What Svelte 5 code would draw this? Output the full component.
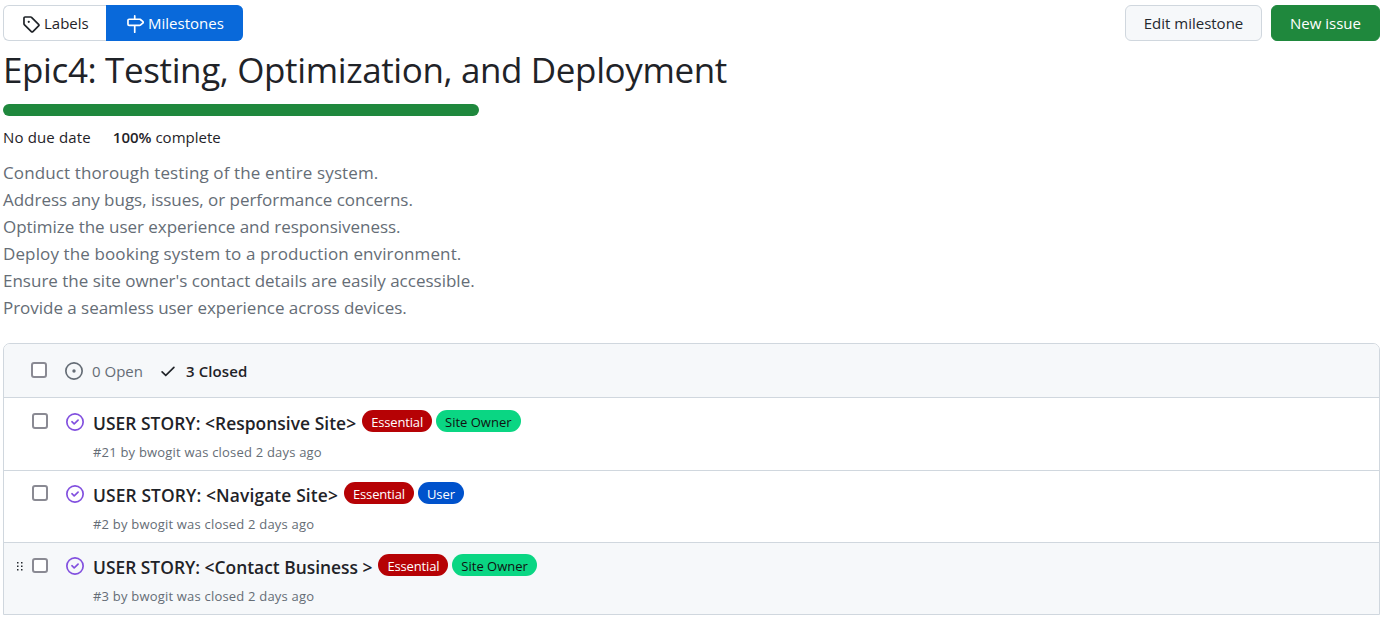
<script>
  const description = [
    'Conduct thorough testing of the entire system.',
    'Address any bugs, issues, or performance concerns.',
    'Optimize the user experience and responsiveness.',
    'Deploy the booking system to a production environment.',
    "Ensure the site owner's contact details are easily accessible.",
    'Provide a seamless user experience across devices.'
  ];

  const essential = { name: 'Essential', tone: 'red' };
  const siteOwner = { name: 'Site Owner', tone: 'green' };
  const user = { name: 'User', tone: 'blue' };

  const issues = [
    { number: 21, title: 'USER STORY: <Responsive Site>', labels: [essential, siteOwner] },
    { number: 2, title: 'USER STORY: <Navigate Site>', labels: [essential, user] },
    { number: 3, title: 'USER STORY: <Contact Business >', labels: [essential, siteOwner], hovered: true }
  ];
</script>

<main>
  <header class="topbar">
    <nav class="subnav">
      <a class="tab labels" href="#labels">
        <svg class="icon" viewBox="0 0 16 16"><path d="M1 7.775V2.75C1 1.784 1.784 1 2.75 1h5.025c.464 0 .91.184 1.238.513l6.25 6.25a1.75 1.75 0 0 1 0 2.474l-5.026 5.026a1.75 1.75 0 0 1-2.474 0l-6.25-6.25A1.752 1.752 0 0 1 1 7.775Zm1.5 0c0 .066.026.13.073.177l6.25 6.25a.25.25 0 0 0 .354 0l5.025-5.025a.25.25 0 0 0 0-.354l-6.25-6.25a.25.25 0 0 0-.177-.073H2.75a.25.25 0 0 0-.25.25ZM6 5a1 1 0 1 1 0 2 1 1 0 0 1 0-2Z" /></svg>
        <span>Labels</span>
      </a>
      <a class="tab selected" href="#milestones">
        <svg class="icon" viewBox="0 0 16 16"><path d="M7.75 0a.75.75 0 0 1 .75.75V3h3.634c.414 0 .814.147 1.13.414l2.07 1.75a1.75 1.75 0 0 1 0 2.672l-2.07 1.75a1.75 1.75 0 0 1-1.13.414H8.5v5.25a.75.75 0 0 1-1.5 0V10H2.75A1.75 1.75 0 0 1 1 8.25v-3.5C1 3.784 1.784 3 2.75 3H7V.75A.75.75 0 0 1 7.75 0Zm4.384 8.5a.25.25 0 0 0 .161-.06l2.07-1.75a.248.248 0 0 0 0-.38l-2.07-1.75a.25.25 0 0 0-.161-.06H2.75a.25.25 0 0 0-.25.25v3.5c0 .138.112.25.25.25h9.384Z" /></svg>
        <span>Milestones</span>
      </a>
    </nav>
    <div class="actions">
      <button class="btn">Edit milestone</button>
      <button class="btn primary">New issue</button>
    </div>
  </header>

  <h1>Epic4: Testing, Optimization, and Deployment</h1>
  <div class="progress"><div class="bar" style="width: 100%"></div></div>
  <div class="stats">
    <span class="due">No due date</span>
    <span><b>100%</b> complete</span>
  </div>

  <div class="description">
    {#each description as line}
      <p>{line}</p>
    {/each}
  </div>

  <section class="box">
    <div class="box-header">
      <span class="check"></span>
      <svg class="icon open-icon" viewBox="0 0 16 16"><path d="M8 9.5a1.5 1.5 0 1 0 0-3 1.5 1.5 0 0 0 0 3Z" /><path d="M8 0a8 8 0 1 1 0 16A8 8 0 0 1 8 0ZM1.5 8a6.5 6.5 0 1 0 13 0 6.5 6.5 0 0 0-13 0Z" /></svg>
      <span class="open">0 Open</span>
      <svg class="icon tick" viewBox="0 0 16 16"><path d="M13.78 4.22a.75.75 0 0 1 0 1.06l-7.25 7.25a.75.75 0 0 1-1.06 0L2.22 9.28a.751.751 0 0 1 .018-1.042.751.751 0 0 1 1.042-.018L6 10.94l6.72-6.72a.75.75 0 0 1 1.06 0Z" /></svg>
      <span class="closed">3 Closed</span>
    </div>
    {#each issues as issue}
      <article class="row" class:hovered={issue.hovered}>
        <span class="grip">
          {#if issue.hovered}
            <svg viewBox="0 0 6 10"><path d="M0 0h1.5v1.5H0zM4 0h1.5v1.5H4zM0 3.5h1.5V5H0zM4 3.5h1.5V5H4zM0 7h1.5v1.5H0zM4 7h1.5v1.5H4z" /></svg>
          {/if}
        </span>
        <span class="check"></span>
        <svg class="icon closed-icon" viewBox="0 0 16 16"><path d="M11.28 6.78a.75.75 0 0 0-1.06-1.06L7.25 8.69 5.78 7.22a.75.75 0 0 0-1.06 1.06l2 2a.75.75 0 0 0 1.06 0l3.5-3.5Z" /><path d="M16 8A8 8 0 1 1 0 8a8 8 0 0 1 16 0Zm-1.5 0a6.5 6.5 0 1 0-13 0 6.5 6.5 0 0 0 13 0Z" /></svg>
        <div>
          <div class="title-line">
            <a class="title" href="#issue-{issue.number}">{issue.title}</a>
            {#each issue.labels as label}
              <span class="pill {label.tone}">{label.name}</span>
            {/each}
          </div>
          <div class="meta">#{issue.number} by bwogit was closed 2 days ago</div>
        </div>
      </article>
    {/each}
  </section>
</main>

<style>
  :global(body) { background: #fff; }
  main {
    box-sizing: border-box;
    width: 1392px;
    height: 622px;
    padding: 5px 12px 0 3px;
    overflow: hidden;
    font-family: "Open Sans", "Noto Sans", sans-serif;
    font-size: 15px;
    color: #1f2328;
    white-space: nowrap;
  }
  a { color: inherit; text-decoration: none; }
  .icon { width: 18px; height: 18px; flex: none; fill: currentColor; }

  .topbar { display: flex; justify-content: space-between; height: 36px; }
  .subnav, .actions { display: flex; }
  .actions { gap: 9px; }
  .tab, .btn {
    box-sizing: border-box;
    height: 36px;
    display: flex;
    align-items: center;
    border: 1px solid #d0d7de;
    border-radius: 6px;
  }
  .tab { width: 103px; padding-left: 18px; gap: 4px; border-right: 0; border-radius: 6px 0 0 6px; }
  .tab .icon { margin-top: 2px; }
  .tab.selected { width: 137px; padding-left: 19px; border-color: #0969da; background: #0969da; color: #fff; border-radius: 0 6px 6px 0; }
  .btn { justify-content: center; width: 137px; padding: 0; background: #f6f8fa; color: #24292f; font: inherit; }
  .btn.primary { width: 109px; border-color: #1f883d; background: #1f883d; color: #fff; }

  h1 { margin: 6px 0 0; height: 46px; line-height: 45px; font-size: 35px; font-weight: 400; letter-spacing: -0.38px; }
  .progress { width: 476px; height: 12px; margin-top: 11px; border-radius: 6px; overflow: hidden; }
  .bar { height: 100%; background: #1f883d; }
  .stats { display: flex; height: 25px; margin-top: 9px; line-height: 24px; }
  .due { margin-right: 22px; letter-spacing: 0.15px; }
  b { font-weight: 600; }

  .description { margin-top: 9px; color: #656d76; font-size: 17px; }
  .description p { margin: 0; height: 27px; line-height: 27px; letter-spacing: -0.03px; }
  .description p:nth-child(1), .description p:nth-child(4) { letter-spacing: 0.12px; }
  .description p:nth-child(5) { letter-spacing: 0; }

  .box { margin-top: 22px; border: 1px solid #d0d7de; border-radius: 7px 7px 0 0; }
  .box-header { display: flex; align-items: center; height: 53px; padding-left: 27px; border-radius: 6px 6px 0 0; background: #f6f8fa; }
  .check { box-sizing: border-box; flex: none; width: 16px; height: 16px; border: 2px solid #8a8a93; border-radius: 3px; background: #fff; }
  .box-header .check { margin-bottom: 1px; }
  .open-icon { margin: 1px 0 0 18px; color: #656d76; }
  .open { margin-left: 9px; color: #656d76; }
  .tick { margin: 1px 0 0 16px; }
  .closed { margin-left: 9px; font-weight: 600; letter-spacing: 0.1px; }

  .row { box-sizing: border-box; display: flex; height: 72px; padding-top: 11px; border-top: 1px solid #d0d7de; }
  .row:nth-of-type(1) { height: 73px; padding-top: 12px; }
  .hovered { background: #f6f8fa; }
  .grip { width: 28px; flex: none; }
  .grip svg { display: block; width: 6px; height: 10px; margin: 8px 0 0 13px; fill: #24292f; }
  .row .check { margin-top: 3px; }
  .row.hovered .check { height: 15px; margin-top: 4px; }
  .closed-icon { margin: 3px 9px 0 18px; color: #8250df; }
  .title-line { display: flex; height: 32px; }
  .title { margin-right: 6px; line-height: 27px; font-size: 17.4px; font-weight: 600; }
  .row:nth-of-type(1) .title { letter-spacing: 0.04px; }
  .row:nth-of-type(2) .title { letter-spacing: 0.12px; }
  .pill { box-sizing: border-box; height: 22px; margin-right: 4px; padding: 0 9px; border-radius: 11px; font-size: 13px; line-height: 24px; }
  .red { background: #b60205; color: #fff; letter-spacing: -0.16px; }
  .green { background: #0ad683; color: #111; }
  .blue { background: #0052cc; color: #fff; }
  .meta { font-size: 13px; line-height: 20px; color: #656d76; letter-spacing: 0.2px; }
</style>
